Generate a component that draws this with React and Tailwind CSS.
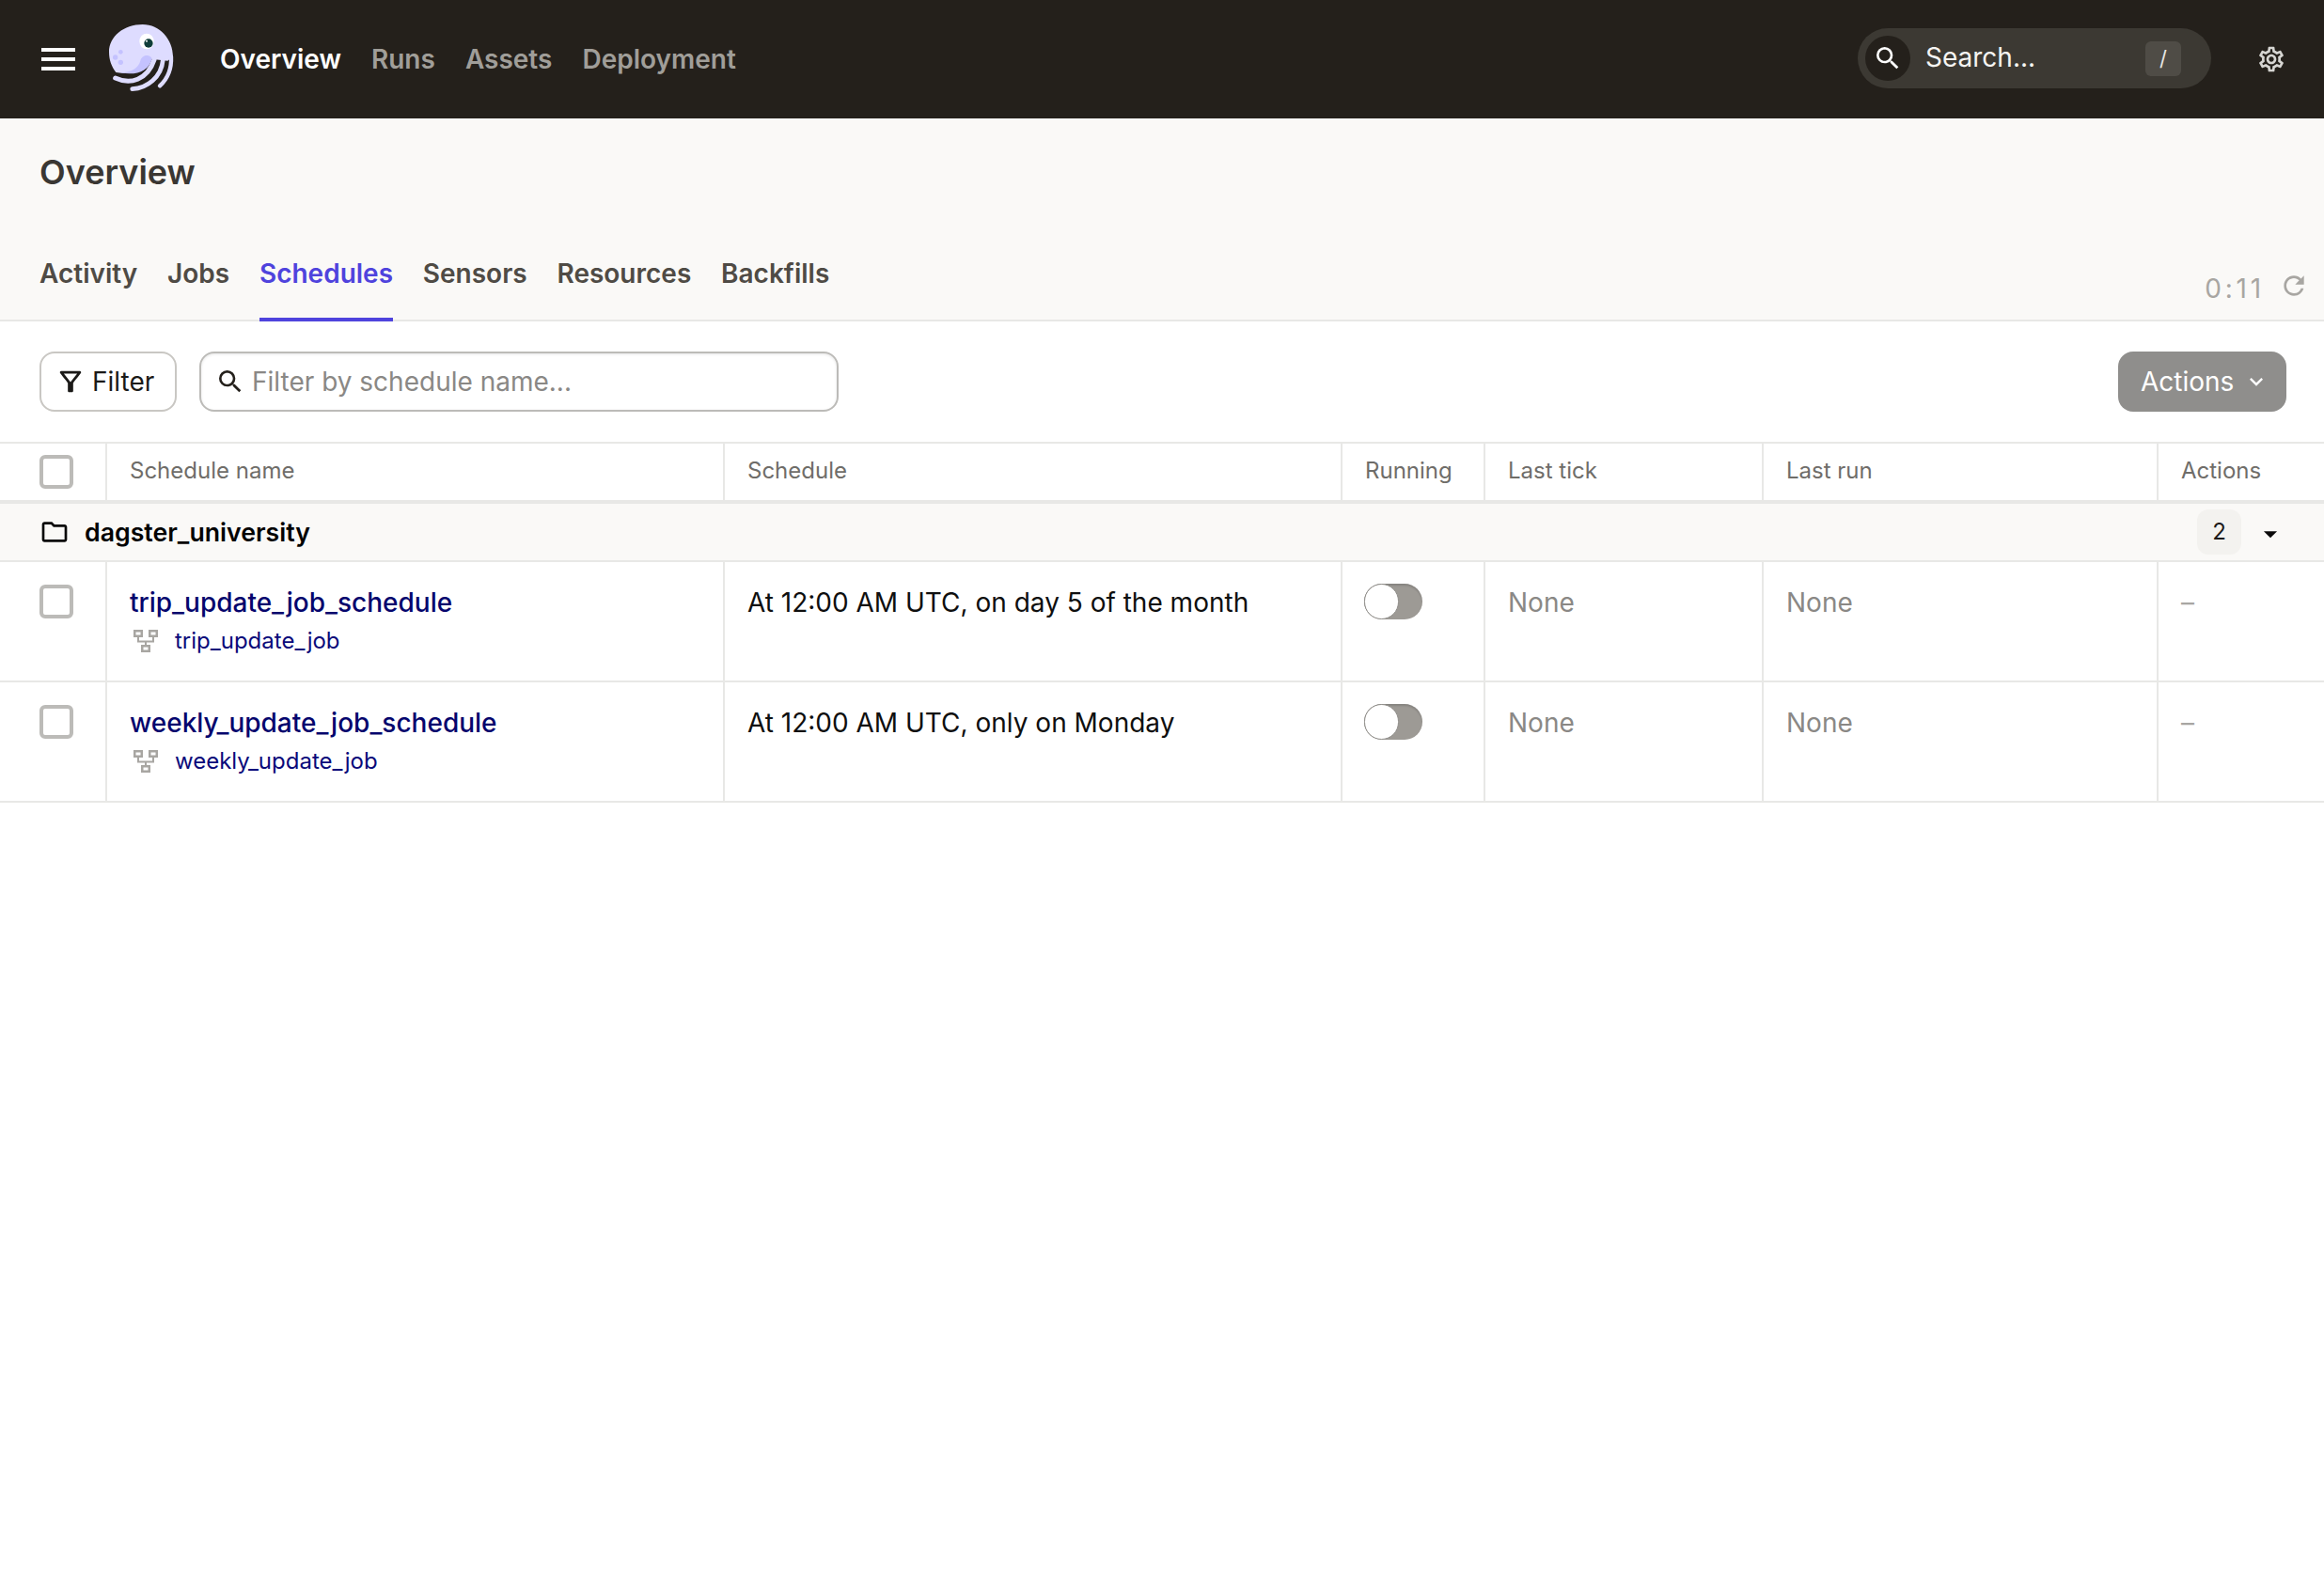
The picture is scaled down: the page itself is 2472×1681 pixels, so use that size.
import React from 'react';
import { MdSearch, MdOutlineSettings, MdOutlineFilterAlt, MdOutlineFolder, MdKeyboardArrowDown, MdArrowDropDown, MdRefresh } from 'react-icons/md';

const navItems = ['Overview', 'Runs', 'Assets', 'Deployment'];
const tabs = ['Activity', 'Jobs', 'Schedules', 'Sensors', 'Resources', 'Backfills'];
const columns = ['Schedule name', 'Schedule', 'Running', 'Last tick', 'Last run', 'Actions'];
const rows = [
    { name: 'trip_update_job_schedule', job: 'trip_update_job', cron: 'At 12:00 AM UTC, on day 5 of the month' },
    { name: 'weekly_update_job_schedule', job: 'weekly_update_job', cron: 'At 12:00 AM UTC, only on Monday' },
];
const gridCols = 'grid grid-cols-[112px_657px_657px_152px_296px_420px_1fr]';

const Logo = () => (
    <svg viewBox="0 0 240 240" className="w-[80px] h-[80px] -translate-y-[1px]">
        <path d="M40 165C25 145 18 125 18 100C18 50 65 12 125 12C180 12 222 60 222 115L205 128L178 125L150 122C140 160 100 175 40 165Z" fill="#dedcff" />
        <path d="M55 166C90 165 112 150 118 128C122 108 150 105 155 122C145 160 105 176 55 166Z" fill="#c4c2ff" />
        <circle cx="55" cy="100" r="7" fill="#c4c2ff" />
        <circle cx="38" cy="117" r="8" fill="#c4c2ff" />
        <circle cx="55" cy="133" r="8" fill="#c4c2ff" />
        <path d="M38 183C85 205 140 190 162 125" fill="none" stroke="#dedcff" strokeWidth="15" strokeLinecap="round" />
        <path d="M92 218C140 215 185 180 190 125" fill="none" stroke="#dedcff" strokeWidth="14" strokeLinecap="round" />
        <path d="M180 208C205 185 218 155 216 115" fill="none" stroke="#dedcff" strokeWidth="13" strokeLinecap="round" />
        <ellipse cx="138" cy="66" rx="23" ry="25" fill="#ffffff" />
        <circle cx="144" cy="72" r="14" fill="#0f3d3a" />
        <circle cx="138" cy="65" r="3" fill="#ffffff" />
    </svg>
);

const JobIcon = () => (
    <svg viewBox="0 0 26 24" className="w-[26px] h-[24px]" fill="none" stroke="#a8a6a2">
        <rect x="1.25" y="1.25" width="7.5" height="5.5" strokeWidth="2.5" />
        <rect x="17.25" y="1.25" width="7.5" height="5.5" strokeWidth="2.5" />
        <rect x="9.25" y="17.25" width="7.5" height="5.5" strokeWidth="2.5" />
        <path d="M5 8V12.5H21V8M13 12.5V16" strokeWidth="2" />
    </svg>
);

const Checkbox = () => (
    <div className="w-[36px] h-[36px] border-4 border-[#bcbbb8] rounded-md bg-white" />
);

const Toggle = () => (
    <div className="w-[62px] h-[38px] rounded-full bg-[#9d9a95] shadow-[inset_0_2px_2px_rgba(0,0,0,0.15)]">
        <div className="w-[37px] h-[38px] rounded-full bg-white border border-[#8f8d89]" />
    </div>
);

const App = () => {
    return (
        <div className="min-h-screen bg-white font-['Inter',sans-serif] text-[28px]">
            <header className="h-[126px] bg-[#24201b] flex items-center pl-[44px] pr-[40px]">
                <div className="flex flex-col gap-[6px] w-[36px]">
                    <div className="h-[4px] bg-white" />
                    <div className="h-[4px] bg-white" />
                    <div className="h-[4px] bg-white" />
                </div>
                <div className="ml-[30px]">
                    <Logo />
                </div>
                <nav className="flex gap-[32px] ml-[44px] font-semibold">
                    {navItems.map((item, i) => (
                        <span key={item} className={i === 0 ? 'text-white' : 'text-[#a09e99]'}>{item}</span>
                    ))}
                </nav>
                <div className="ml-auto w-[376px] h-[64px] rounded-full bg-[#3c3933] flex items-center pl-[8px] pr-[32px] -translate-y-[1px]">
                    <div className="w-[48px] h-[48px] rounded-full bg-[#24201b] flex items-center justify-center">
                        <MdSearch className="text-white w-[32px] h-[32px]" />
                    </div>
                    <span className="ml-[16px] text-[#f5f4f2] -translate-y-[1px]">Search...</span>
                    <span className="ml-auto w-[38px] h-[37px] rounded-md bg-[#4f4c46] text-[#e8e7e4] text-[22px] flex items-center justify-center">/</span>
                </div>
                <MdOutlineSettings className="ml-[48px] text-[#d6d5d2] w-[32px] h-[32px]" />
            </header>

            <div className="h-[216px] bg-[#faf9f7] border-b-2 border-[#e8e8e6] pl-[42px] pr-[16px] flex flex-col">
                <h1 className="pt-[33px] text-[36px] leading-[48px] font-semibold text-[#3a3733]">Overview</h1>
                <div className="mt-auto flex justify-between items-end -mb-[2px]">
                    <div className="flex gap-[31.8px]">
                        {tabs.map((tab) => (
                            <span
                                key={tab}
                                className={
                                    tab === 'Schedules'
                                        ? 'h-[72px] pt-[1px] pb-[27px] leading-[40px] font-semibold text-[#4f43dd] border-b-4 border-[#4f43dd]'
                                        : 'h-[72px] pt-[1px] pb-[27px] leading-[40px] font-semibold text-[#4f4b45] border-b-4 border-transparent'
                                }
                            >
                                {tab}
                            </span>
                        ))}
                    </div>
                    <div className="flex items-center gap-[15px] pb-[14px] text-[#a8a6a2]">
                        <span className="tracking-[3.8px]">0:11</span>
                        <MdRefresh className="w-[32px] h-[32px] -translate-y-[3px]" />
                    </div>
                </div>
            </div>

            <div className="h-[128px] flex items-center pl-[42px] pr-[40px]">
                <button type="button" className="w-[146px] h-[64px] rounded-2xl border-2 border-[#c9c7c3] flex items-center pl-[14px] text-[#1b1a18]">
                    <MdOutlineFilterAlt className="w-[34px] h-[34px]" />
                    <span className="ml-[6px]">Filter</span>
                </button>
                <div className="ml-[24px] w-[680px] h-[64px] rounded-2xl border-2 border-[#bcbbb8] flex items-center pl-[15px] shadow-[inset_0_1px_3px_rgba(0,0,0,0.1)]">
                    <MdSearch className="w-[32px] h-[32px] text-[#24201b]" />
                    <input
                        className="ml-[7px] flex-1 outline-none bg-transparent placeholder:text-[#8a8885]"
                        placeholder="Filter by schedule name..."
                    />
                </div>
                <button type="button" className="ml-auto w-[179px] h-[64px] rounded-2xl bg-[#8f8e8c] flex items-center pl-[24px] text-white">
                    <span>Actions</span>
                    <MdKeyboardArrowDown className="ml-[10px] w-[28px] h-[28px]" />
                </button>
            </div>

            <div className={`${gridCols} border-t-2 border-b-4 border-[#e8e8e6] h-[66px] text-[24px] text-[#6f6d69]`}>
                <div className="flex items-start pl-[42px] pt-[12px]">
                    <Checkbox />
                </div>
                {columns.map((col) => (
                    <div key={col} className="border-l-2 border-[#e8e8e6] pl-[24px] pt-[12px] leading-[34px]">{col}</div>
                ))}
            </div>

            <div className="h-[62px] bg-[#faf9f7] border-b-2 border-[#e8e8e6] flex items-center pl-[42px] pr-[40px]">
                <MdOutlineFolder className="w-[32px] h-[32px] text-[#0a0a0a]" />
                <span className="ml-[16px] text-[26.7px] font-semibold text-[#030303]">dagster_university</span>
                <span className="ml-auto w-[47px] h-[48px] rounded-xl bg-[#f3f2ef] flex items-center justify-center text-[24px] text-[#1b1a18]">2</span>
                <MdArrowDropDown className="ml-[14px] w-[34px] h-[34px] translate-y-[2px] text-[#0a0a0a]" />
            </div>

            {rows.map((row) => (
                <div key={row.name} className={`${gridCols} h-[128px] border-b-2 border-[#e8e8e6]`}>
                    <div className="pl-[42px] pt-[24px]">
                        <Checkbox />
                    </div>
                    <div className="border-l-2 border-[#e8e8e6] pl-[24px] pt-[23px]">
                        <div className="leading-[40px] font-medium text-[#05056d]">{row.name}</div>
                        <div className="flex items-center mt-[3px] pl-[4px] gap-[18px] text-[24px] leading-[36px] text-[#0a0a7a]">
                            <JobIcon />
                            <span>{row.job}</span>
                        </div>
                    </div>
                    <div className="border-l-2 border-[#e8e8e6] pl-[24px] pt-[23px] leading-[40px] text-[#0f0f0f]">{row.cron}</div>
                    <div className="border-l-2 border-[#e8e8e6] pl-[23px] pt-[23px]">
                        <Toggle />
                    </div>
                    <div className="border-l-2 border-[#e8e8e6] pl-[24px] pt-[23px] leading-[40px] text-[#8a8885]">None</div>
                    <div className="border-l-2 border-[#e8e8e6] pl-[24px] pt-[23px] leading-[40px] text-[#8a8885]">None</div>
                    <div className="border-l-2 border-[#e8e8e6] pl-[24px] pt-[23px] leading-[40px] text-[#a8a6a2]">–</div>
                </div>
            ))}
        </div>
    );
};

export default App;
